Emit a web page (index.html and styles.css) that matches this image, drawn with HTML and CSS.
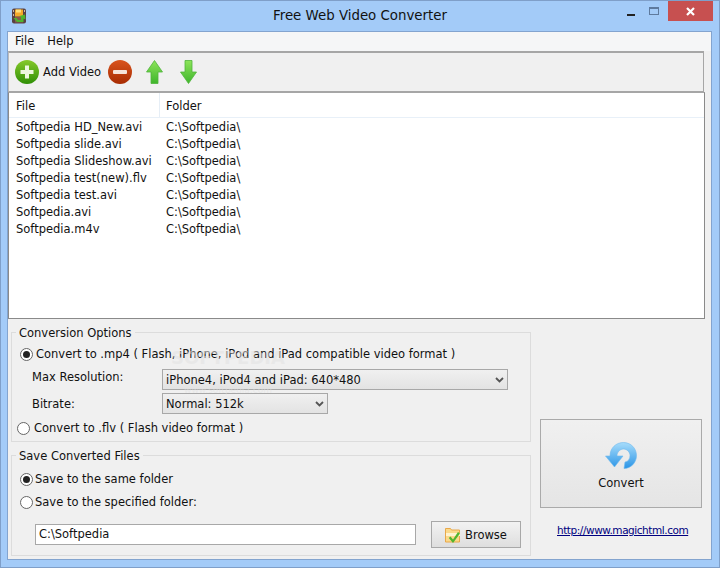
FILE: index.html
```html
<!DOCTYPE html>
<html lang="en">
<head>
<meta charset="utf-8">
<title>Free Web Video Converter</title>
<link rel="stylesheet" href="styles.css">
</head>
<body>
<div class="window">
  <header class="titlebar">
    <svg class="app-icon" width="16" height="16" viewBox="0 0 16 16">
      <rect x="1" y="0.5" width="14" height="15" rx="2" fill="#5a4242"/>
      <rect x="4" y="1.500" width="8" height="7" fill="#f4a92a"/>
      <rect x="5" y="1.500" width="5" height="3" fill="#ffdf7a"/>
      <rect x="4" y="9" width="8" height="5.500" fill="#8a5a4a"/>
      <path d="M2.500 10h3l1.500 2h3V9.500L8.500 8 14 6.500 14.500 11.500 12.500 10.500V14H6z" fill="#4fb52e"/>
      <path d="M2 2h1v2H2zM2 6h1v2H2zM13 2h1v2h-1z" fill="#c9b9a9"/>
    </svg>
    <h1 class="title">Free Web Video Converter</h1>
    <div class="controls">
      <span class="ctl"><span class="min"></span></span>
      <span class="ctl"><span class="max"></span></span>
      <span class="close">
        <svg width="9" height="9" viewBox="0 0 9 9"><path d="M1 1l7 7M8 1L1 8" stroke="#fff" stroke-width="2.2" fill="none"/></svg>
      </span>
    </div>
  </header>

  <main class="client">
    <nav class="menu"><span>File</span><span>Help</span></nav>

    <div class="toolbar">
      <svg class="tool first" width="24" height="24" viewBox="0 0 24 24">
        <defs>
          <linearGradient id="g" x1="0" y1="0" x2="0" y2="1"><stop offset="0" stop-color="#86c92a"/><stop offset="1" stop-color="#2f8f06"/></linearGradient>
          <linearGradient id="r" x1="0" y1="0" x2="0" y2="1"><stop offset="0" stop-color="#d9541e"/><stop offset="1" stop-color="#a82c02"/></linearGradient>
          <linearGradient id="a" x1="0" y1="0" x2="0" y2="1"><stop offset="0" stop-color="#8de45a"/><stop offset="1" stop-color="#3fb52c"/></linearGradient>
        </defs>
        <circle cx="12" cy="12" r="12" fill="url(#g)"/>
        <path d="M10 5.500h4V10h4.500v4H14v4.500h-4V14H5.500v-4H10z" fill="#edf7df"/>
      </svg>
      <span class="tool-label">Add Video</span>
      <svg class="tool" width="24" height="24" viewBox="0 0 24 24">
        <circle cx="12" cy="12" r="12" fill="url(#r)"/>
        <rect x="5" y="10" width="14" height="4" rx="1" fill="#f6e4da"/>
      </svg>
      <svg class="tool up" width="17" height="24" viewBox="0 0 17 24">
        <path d="M8.500 0.500 16.500 12h-4.500v11.500H5V12H0.500z" fill="url(#a)" stroke="#4fb53a" stroke-width="0.800"/>
      </svg>
      <svg class="tool down" width="17" height="24" viewBox="0 0 17 24">
        <path d="M8.500 23.500 16.500 12h-4.500V0.500H5V12H0.500z" fill="url(#a)" stroke="#4fb53a" stroke-width="0.800"/>
      </svg>
    </div>

    <section class="list">
      <div class="row head"><span class="c1">File</span><span class="c2">Folder</span></div>
      <div class="rows">
        <div class="row"><span class="c1">Softpedia HD_New.avi</span><span class="c2">C:\Softpedia\</span></div>
        <div class="row"><span class="c1">Softpedia slide.avi</span><span class="c2">C:\Softpedia\</span></div>
        <div class="row"><span class="c1">Softpedia Slideshow.avi</span><span class="c2">C:\Softpedia\</span></div>
        <div class="row"><span class="c1">Softpedia test(new).flv</span><span class="c2">C:\Softpedia\</span></div>
        <div class="row"><span class="c1">Softpedia test.avi</span><span class="c2">C:\Softpedia\</span></div>
        <div class="row"><span class="c1">Softpedia.avi</span><span class="c2">C:\Softpedia\</span></div>
        <div class="row"><span class="c1">Softpedia.m4v</span><span class="c2">C:\Softpedia\</span></div>
      </div>
    </section>

    <div class="bottom">
      <div class="options">
        <fieldset class="group conv">
          <legend>Conversion Options</legend>
          <div class="radio-line"><span class="radio on"></span><span>Convert to .mp4 ( Flash, iPhone, iPod and iPad compatible video format )</span></div>
          <div class="field res">
            <span class="field-label">Max Resolution:</span>
            <span class="select wide">iPhone4, iPod4 and iPad: 640*480<svg width="9" height="6" viewBox="0 0 9 6"><path d="M1 1l3.500 3.500L8 1" stroke="#555" stroke-width="1.800" fill="none"/></svg></span>
          </div>
          <div class="field rate">
            <span class="field-label">Bitrate:</span>
            <span class="select narrow">Normal: 512k<svg width="9" height="6" viewBox="0 0 9 6"><path d="M1 1l3.500 3.500L8 1" stroke="#555" stroke-width="1.800" fill="none"/></svg></span>
          </div>
          <div class="radio-line flv"><span class="radio"></span><span>Convert to .flv ( Flash video format )</span></div>
          <div class="watermark"><b>SOFTPEDIA</b><i>www.softpedia.com</i></div>
        </fieldset>

        <fieldset class="group save">
          <legend>Save Converted Files</legend>
          <div class="radio-line"><span class="radio on"></span><span>Save to the same folder</span></div>
          <div class="radio-line second"><span class="radio"></span><span>Save to the specified folder:</span></div>
          <div class="path-row">
            <span class="path">C:\Softpedia</span>
            <span class="browse">
              <svg width="16" height="16" viewBox="0 0 16 16">
                <path d="M0.500 1.500h5l1 1.500h8v12h-14z" fill="#fbd98a" stroke="#e9a84a"/>
                <rect x="1" y="6" width="14" height="3" fill="#fff3cf"/>
                <path d="M5.500 9.500l2.500 3 5-7.500 2 1.500-7 9.500-4.200-5z" fill="#52b52e"/>
              </svg>
              <span>Browse</span>
            </span>
          </div>
        </fieldset>
      </div>

      <aside class="side">
        <div class="convert">
          <svg width="32" height="27" viewBox="0 0 32 27">
            <defs><linearGradient id="b" x1="0" y1="0" x2="0" y2="1"><stop offset="0" stop-color="#a6dcfb"/><stop offset="1" stop-color="#2c95e6"/></linearGradient></defs>
            <path d="M5 14C5 6 11 0.500 18.500 0.500 26 0.500 31.500 6.500 31.500 13.500S26 26.500 19 26.500L20 20C23.500 19.500 25 16.500 25 13.500 25 10 22 7 18.500 7 15 7 12 10 12 14H18L9.500 25 0.500 14z" fill="url(#b)" stroke="#6db8ee" stroke-width="0.600"/>
          </svg>
          <span>Convert</span>
        </div>
        <a class="link" href="#">http://www.magichtml.com</a>
      </aside>
    </div>
  </main>
</div>
</body>
</html>
```
FILE: styles.css
```css
* { box-sizing: border-box; }
html, body { margin: 0; padding: 0; }
body { width: 720px; height: 568px; overflow: hidden; font-family: "DejaVu Sans", sans-serif; font-size: 11.5px; color: #111; }

.window { width: 720px; height: 568px; background: #a3cbf8; border: 1px solid #7f9fc9; padding: 0 7px 7px 6px; display: flex; flex-direction: column; }

.titlebar { height: 30px; flex: none; display: flex; align-items: flex-start; }
.app-icon { margin: 7px 0 0 4px; flex: none; }
.title { flex: 1; margin: 7px 0 0; padding-left: 81px; text-align: center; font: 400 13.350px/16px "DejaVu Sans", sans-serif; color: #111; }
.controls { display: flex; flex: none; align-items: flex-start; margin-right: -1px; }
.ctl { width: 28px; height: 20px; display: flex; align-items: center; justify-content: center; }
.min { width: 8px; height: 2px; background: #222; margin: 8px 0 0 10px; }
.max { width: 10px; height: 8px; border: 1px solid #5e7a9e; border-top-width: 2px; }
.close { width: 45px; height: 20px; background: #c75050; display: flex; align-items: center; justify-content: center; }

.client { flex: 1; background: #f0f0f0; border: 1px solid #83a4cf; display: flex; flex-direction: column; min-height: 0; }

.menu { height: 19px; flex: none; background: #f5f6f7; display: flex; gap: 13px; padding: 2px 0 0 7px; line-height: 15px; }

.toolbar { height: 41px; width: 696px; flex: none; border: 1px solid #a6a6a6; border-top-width: 2px; border-left-color: #bbb; display: flex; align-items: center; padding-left: 6px; background: #f0f0f0; }
.tool { flex: none; }
.tool-label { margin: 0 7px 0 4px; }
.up { margin-left: 14px; }
.down { margin-left: 17px; }

.list { width: 697px; height: 227px; flex: none; background: #fff; border: 1px solid #8a8a8a; border-top-color: #a6a6a6; }
.head { height: 25px; align-items: center; border-bottom: 1px solid #e8f0f8; }
.head .c2 { padding-top: 1px; }
.row { display: flex; }
.rows { padding-top: 1px; }
.rows .row { height: 17px; line-height: 17px; }
.c1 { width: 151px; padding-left: 7px; flex: none; }
.c2 { padding-left: 6px; }
.head .c1 { border-right: 1px solid #e6eef6; height: 24px; line-height: 26px; }

.bottom { flex: 1; display: flex; min-height: 0; }
.options { width: 523px; flex: none; padding-left: 3px; display: flex; flex-direction: column; }

.group { margin: 0; padding: 0; border: 1px solid #dcdcdc; width: 520px; }
.group legend { margin-left: 4px; padding: 2px 3px 0; line-height: 13px; }
.conv { height: 117px; margin-top: 6px; position: relative; }
.save { height: 108px; margin-top: 6px; }

.watermark { position: absolute; left: 151px; top: 8px; width: 130px; color: rgba(226, 226, 226, 0.55); text-align: center; pointer-events: none; }
.watermark b { display: block; font-size: 18px; line-height: 20px; }
.watermark i { display: block; margin-top: 16px; font-style: normal; font-size: 9px; line-height: 12px; }

.radio-line { display: flex; align-items: center; height: 14px; gap: 3px; }
.conv > .radio-line { margin: 7px 0 0 8px; }
.conv > .flv { margin: 7px 0 0 5px; gap: 4px; }
.save > .radio-line { margin: 9px 0 0 8px; gap: 2px; }
.save > .second { margin-top: 9px; }

.radio { width: 13px; height: 13px; border-radius: 50%; border: 1px solid #666; background: #fff; flex: none; display: flex; align-items: center; justify-content: center; }
.radio.on::after { content: ""; width: 7px; height: 7px; border-radius: 50%; background: #222; }

.field { display: flex; align-items: center; padding-left: 20px; }
.res { margin-top: 8px; }
.rate { margin-top: 3px; }
.field-label { width: 130px; flex: none; }
.res .field-label { margin-top: -5px; }
.select { height: 21px; border: 1px solid #a8a8a8; background: linear-gradient(#f0f0f0, #e3e3e3); display: flex; align-items: center; justify-content: space-between; padding: 0 3px 0 3px; }
.wide { width: 346px; }
.narrow { width: 166px; }

.path-row { display: flex; align-items: center; margin: 12px 0 0 23px; }
.path { width: 381px; height: 21px; line-height: 19px; border: 1px solid #a8a8a8; background: #fff; padding-left: 3px; }
.browse { margin-left: 15px; width: 90px; height: 27px; border: 1px solid #a8a8a8; background: linear-gradient(#f2f2f2, #dedede); display: flex; align-items: center; justify-content: center; gap: 4px; }

.side { flex: 1; display: flex; flex-direction: column; align-items: flex-start; padding: 100px 0 0 9px; }
.convert { width: 162px; height: 89px; border: 1px solid #aaa; background: linear-gradient(#f0f0f0, #e5e5e5); display: flex; flex-direction: column; align-items: center; padding-top: 22px; gap: 7px; }
.link { margin: 16px 0 0 17px; color: #00007f; text-decoration: underline; font-size: 10.500px; letter-spacing: -0.450px; white-space: nowrap; }
```
